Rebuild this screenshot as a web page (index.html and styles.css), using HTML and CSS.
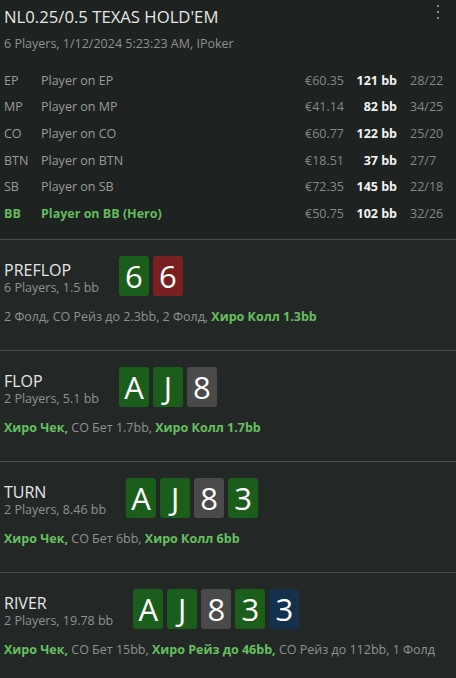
FILE: index.html
```html
<!DOCTYPE html>
<html lang="en">
<head>
    <meta charset="UTF-8">
    <meta name="viewport" content="width=device-width, initial-scale=1.0">
    <title>Hand History</title>
    <link rel="stylesheet" href="styles.css">
</head>
<body>

    <div class="hand">
        <div class="hand-header">
            <h1 class="hand-title">NL0.25/0.5 TEXAS HOLD'EM</h1>
            <div class="hand-info">6 Players, 1/12/2024 5:23:23 AM, IPoker</div>
            <button class="menu-btn" aria-label="Menu">
                <svg width="4" height="16" viewBox="0 0 4 16"><rect x="1" y="1" width="2" height="2" fill="#8a8d8b"/><rect x="1" y="7" width="2" height="2" fill="#8a8d8b"/><rect x="1" y="13" width="2" height="2" fill="#8a8d8b"/></svg>
            </button>

            <div class="players">
                <div class="player">
                    <span class="pos">EP</span><span class="name">Player on EP</span>
                    <span class="money">€60.35</span><span class="bb">121 bb</span><span class="stats">28/22</span>
                </div>
                <div class="player">
                    <span class="pos">MP</span><span class="name">Player on MP</span>
                    <span class="money">€41.14</span><span class="bb">82 bb</span><span class="stats">34/25</span>
                </div>
                <div class="player">
                    <span class="pos">CO</span><span class="name">Player on CO</span>
                    <span class="money">€60.77</span><span class="bb">122 bb</span><span class="stats">25/20</span>
                </div>
                <div class="player">
                    <span class="pos">BTN</span><span class="name">Player on BTN</span>
                    <span class="money">€18.51</span><span class="bb">37 bb</span><span class="stats">27/7</span>
                </div>
                <div class="player">
                    <span class="pos">SB</span><span class="name">Player on SB</span>
                    <span class="money">€72.35</span><span class="bb">145 bb</span><span class="stats">22/18</span>
                </div>
                <div class="player hero">
                    <span class="pos">BB</span><span class="name">Player on BB (Hero)</span>
                    <span class="money">€50.75</span><span class="bb">102 bb</span><span class="stats">32/26</span>
                </div>
            </div>
        </div>

        <div class="street">
            <div class="street-head">
                <div class="street-label">
                    <div class="street-name">PREFLOP</div>
                    <div class="street-info">6 Players, 1.5 bb</div>
                </div>
                <div class="cards">
                    <span class="card green">6</span>
                    <span class="card red">6</span>
                </div>
            </div>
            <div class="actions">2 Фолд, CO Рейз до 2.3bb, 2 Фолд, <b>Хиро Колл 1.3bb</b></div>
        </div>

        <div class="street">
            <div class="street-head">
                <div class="street-label">
                    <div class="street-name">FLOP</div>
                    <div class="street-info">2 Players, 5.1 bb</div>
                </div>
                <div class="cards">
                    <span class="card green">A</span>
                    <span class="card green">J</span>
                    <span class="card grey">8</span>
                </div>
            </div>
            <div class="actions"><b>Хиро Чек,</b> CO Бет 1.7bb, <b>Хиро Колл 1.7bb</b></div>
        </div>

        <div class="street">
            <div class="street-head">
                <div class="street-label">
                    <div class="street-name">TURN</div>
                    <div class="street-info">2 Players, 8.46 bb</div>
                </div>
                <div class="cards">
                    <span class="card green">A</span>
                    <span class="card green">J</span>
                    <span class="card grey">8</span>
                    <span class="card green">3</span>
                </div>
            </div>
            <div class="actions"><b>Хиро Чек,</b> CO Бет 6bb, <b>Хиро Колл 6bb</b></div>
        </div>

        <div class="street">
            <div class="street-head">
                <div class="street-label">
                    <div class="street-name">RIVER</div>
                    <div class="street-info">2 Players, 19.78 bb</div>
                </div>
                <div class="cards">
                    <span class="card green">A</span>
                    <span class="card green">J</span>
                    <span class="card grey">8</span>
                    <span class="card green">3</span>
                    <span class="card blue">3</span>
                </div>
            </div>
            <div class="actions"><b>Хиро Чек,</b> CO Бет 15bb, <b>Хиро Рейз до 46bb,</b> CO Рейз до 112bb, 1 Фолд</div>
        </div>
    </div>

</body>
</html>
```

FILE: styles.css
```css
body {
    margin: 0;
    background-color: #232826;
    font-family: "Open Sans", "Noto Sans", sans-serif;
    color: #8f9290;
}

.hand-header {
    position: relative;
    background-color: #1e2220;
    padding: 5px 4px 12px;
    border-bottom: 1px solid #4b4f4c;
}

.hand-title {
    margin: 0;
    font-size: 16.7px;
    font-weight: normal;
    line-height: 24px;
    color: #e6e7e6;
}

.hand-info {
    margin-top: 6px;
    font-size: 12.5px;
    line-height: 18px;
    color: #8f9290;
}

.menu-btn {
    position: absolute;
    top: 4px;
    right: 16px;
    padding: 0;
    border: none;
    background: none;
    cursor: pointer;
}

.players {
    margin-top: 14px;
}

.player {
    display: grid;
    grid-template-columns: 37px 1fr 44px 48px 55px;
    height: 26.67px;
    align-items: center;
    font-size: 12.5px;
    white-space: nowrap;
    color: #9a9c9b;
}

.player .money {
    color: #858886;
}

.player .bb {
    text-align: right;
    font-weight: bold;
    color: #f2f2f2;
}

.player .stats {
    padding-left: 13px;
    color: #858886;
}

.player.hero .pos,
.player.hero .name {
    font-weight: bold;
    color: #62bd5c;
}

.street {
    padding: 16px 4px 24px;
    border-bottom: 1px solid #4b4f4c;
}

.street-head {
    display: flex;
    align-items: flex-start;
    gap: 20px;
}

.street-label {
    padding-top: 4px;
}

.street-name {
    font-size: 16px;
    line-height: 20px;
    color: #e6e7e6;
}

.street-info {
    font-size: 12.5px;
    line-height: 16px;
    color: #8f9290;
}

.cards {
    display: flex;
    gap: 4px;
}

.card {
    width: 30px;
    height: 40px;
    border-radius: 3px;
    display: flex;
    justify-content: center;
    align-items: center;
    font-size: 31px;
    color: #ffffff;
}

.card.green { background-color: #1b5e1b; }
.card.red { background-color: #7a1f1f; }
.card.grey { background-color: #4a4a4a; }
.card.blue { background-color: #14304c; }

.actions {
    margin-top: 12px;
    font-size: 12.5px;
    line-height: 18px;
    white-space: nowrap;
    color: #8f9290;
}

.actions b {
    color: #66c060;
}
```
